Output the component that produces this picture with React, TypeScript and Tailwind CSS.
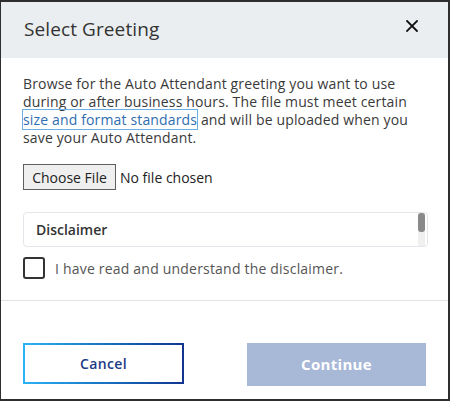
import React from "react";

export default function App() {
  const font = { fontFamily: '"Open Sans", "Noto Sans", sans-serif' };
  return (
    <div
      className="w-[450px] h-[401px] bg-white border-l border-t-2 border-r-2 border-b-2 border-[#2e2e2e] flex flex-col text-[#3a3a3a]"
      style={font}
    >
      <div className="h-[56px] bg-[#ebeef0] flex items-center justify-between pl-[23px] pr-[30px] shrink-0">
        <div className="text-[19px] text-[#333] tracking-[0.1px] mt-[-2px]">Select Greeting</div>
        <svg width="12" height="12" viewBox="0 0 12 12" className="mt-[-8px]">
          <path d="M1 1 L11 11 M11 1 L1 11" stroke="#111" strokeWidth="1.8" strokeLinecap="square" />
        </svg>
      </div>
      <div className="flex flex-col px-[22px] pt-[17px]">
        <p className="text-[14px] leading-[18px] tracking-[0.15px]">
          Browse for the Auto Attendant greeting you want to use
          <br />
          during or after business hours. The file must meet certain
          <br />
          <span className="text-[#2f6db0] outline outline-1 outline-[#6aaee8]">size and format standards</span>{" "}
          and will be uploaded when you
          <br />
          save your Auto Attendant.
        </p>
        <div className="flex items-center mt-[17px]">
          <div className="h-[26px] w-[93px] bg-[#efefef] border border-[#5f5f5f] flex items-center justify-center text-[14px] text-[#222]">
            Choose File
          </div>
          <span className="ml-[4px] text-[14px] text-[#222]">No file chosen</span>
        </div>
        <div className="mt-[22px] h-[35px] w-[405px] border border-[#e3e6ea] rounded-[4px] flex">
          <div className="flex-1 flex items-center pl-[12px] text-[14px] font-semibold text-[#333]">
            Disclaimer
          </div>
          <div className="w-[7px] mr-[2px] bg-[#f0f0f0] flex flex-col">
            <div className="h-[19px] bg-[#8a8a8a] rounded-[3px]" />
          </div>
        </div>
        <div className="flex items-center mt-[10px]">
          <div className="w-[22px] h-[22px] border-2 border-[#333] rounded-[3px]" />
          <span className="ml-[10px] text-[14px] text-[#555] tracking-[0.2px]">
            I have read and understand the disclaimer.
          </span>
        </div>
      </div>
      <div className="mt-[21px] h-px bg-[#e2e2e2]" />
      <div className="flex justify-between pl-[22px] pr-[22px] mt-[42px]">
        <div className="w-[161px] h-[41px] p-[2px] bg-gradient-to-r from-[#2cb3f7] to-[#12348f]">
          <div className="w-full h-full bg-white flex items-center justify-center text-[14px] font-semibold text-[#1d3a87] tracking-[0.4px]">
            Cancel
          </div>
        </div>
        <div className="w-[179px] h-[43px] bg-[#a8b8d7] flex items-center justify-center text-[15px] font-bold text-white tracking-[0.3px]">
          Continue
        </div>
      </div>
    </div>
  );
}
